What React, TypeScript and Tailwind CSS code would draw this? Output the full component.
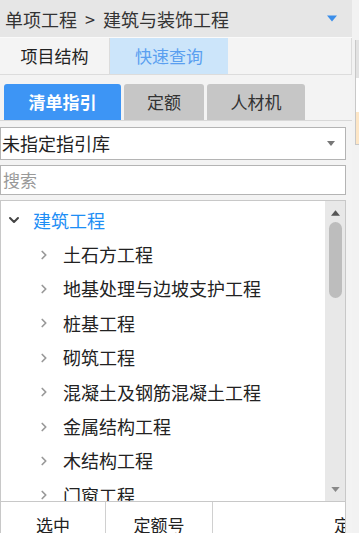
import { ChevronDown, ChevronRight } from "lucide-react";

const font = { fontFamily: '"Noto Sans CJK SC", "Noto Sans", sans-serif' };

const items = [
  "土石方工程",
  "地基处理与边坡支护工程",
  "桩基工程",
  "砌筑工程",
  "混凝土及钢筋混凝土工程",
  "金属结构工程",
  "木结构工程",
  "门窗工程",
];

const Triangle = ({ up, className }: { up?: boolean; className: string }) => (
  <svg width="10" height="6" viewBox="0 0 10 6" className={className}>
    <path d={up ? "M0 6 L5 0 L10 6 Z" : "M0 0 L10 0 L5 6 Z"} fill="currentColor" />
  </svg>
);

export default function App() {
  return (
    <div className="flex w-[359px] h-[533px] overflow-hidden bg-[#f3f3f3] text-[#222]" style={font}>
      {/* main panel */}
      <div className="flex flex-col w-[352px] shrink-0">
        <div className="flex items-center h-[39px] bg-[#e6e6e6] pl-[5px] pr-[15px] text-[18px] text-[#333]">
          <span className="flex-1 leading-none whitespace-pre">单项工程  &gt;  建筑与装饰工程</span>
          <Triangle className="text-[#3b8eea] w-[10px] h-[7px]" />
        </div>
        <div className="h-px bg-[#fafafa]" />
        <div className="flex h-[39px] border-b border-r border-[#dcdcdc] text-[17px]">
          <div className="flex items-center justify-center w-[110px] bg-[#f4f4f4] border-r border-[#dcdcdc]">项目结构</div>
          <div className="flex items-center justify-center w-[118px] bg-[#cce5fa] text-[#5a9ff0]">快速查询</div>
          <div className="flex-1 bg-[#f4f4f4]" />
        </div>
        <div className="flex gap-[3px] pl-[4px] pt-[9px] border-b border-[#d8d8d8] text-[17px]">
          <div className="flex items-center justify-center w-[117px] h-[36px] rounded-t-[3px] bg-[#3d95f5] text-white font-bold">清单指引</div>
          <div className="flex items-center justify-center w-[80px] h-[36px] rounded-t-[3px] bg-[#c6c6c6] text-[#333]">定额</div>
          <div className="flex items-center justify-center w-[98px] h-[36px] rounded-t-[3px] bg-[#c6c6c6] text-[#333]">人材机</div>
        </div>
        <div className="flex flex-col w-[346px] flex-1 bg-[#f3f3f3]">
          <div className="flex items-center mt-[6px] h-[33px] bg-white border border-[#b4b4b4] pl-[1px] pr-[10px] text-[18px]">
            <span className="flex-1">未指定指引库</span>
            <Triangle className="text-[#777] w-[8px] h-[5px]" />
          </div>
          <div className="flex items-center mt-[5px] h-[30px] bg-white border border-[#b4b4b4] pl-[2px] text-[17px] text-[#999]">
            搜索
          </div>
          <div className="flex mt-[5px] h-[302px] bg-white border border-[#c8c8c8]">
            <div className="flex-1 overflow-hidden pt-[2px]">
              <div className="flex items-center h-[34.4px]">
                <ChevronDown className="ml-[5px] w-[16px] h-[16px] text-[#444]" strokeWidth={3} />
                <span className="ml-[11px] text-[18px] text-[#1e8ef5]">建筑工程</span>
              </div>
              {items.map((t) => (
                <div key={t} className="flex items-center h-[34.4px]">
                  <ChevronRight className="ml-[36px] w-[14px] h-[14px] text-[#999]" strokeWidth={3} />
                  <span className="ml-[12px] text-[18px] text-[#222] whitespace-nowrap">{t}</span>
                </div>
              ))}
            </div>
            <div className="flex flex-col items-center w-[20px] bg-[#e8e8e8]">
              <Triangle up className="mt-[9px] text-[#555] w-[9px] h-[6px]" />
              <div className="mt-[6px] w-[13px] h-[76px] rounded-full bg-[#bdbdbd]" />
              <div className="flex-1" />
              <Triangle className="mb-[9px] text-[#888] w-[9px] h-[5px]" />
            </div>
          </div>
          <div className="flex flex-1 bg-white border-l border-r border-[#c8c8c8] text-[17px] leading-none overflow-hidden">
            <div className="flex justify-center pt-[14px] w-[105px] border-r border-[#d0d0d0]">选中</div>
            <div className="flex justify-center pt-[14px] w-[107px] border-r border-[#d0d0d0]">定额号</div>
            <div className="flex-1 flex justify-end pt-[14px] overflow-hidden">
              <span className="mr-[-6px]">定</span>
            </div>
          </div>
        </div>
      </div>
      {/* right strip */}
      <div className="flex-1 bg-[#f2f2f2] pt-[40px] pl-[3px]">
        <div className="flex flex-col h-[105px] border-l border-b border-[#c8c8c8]">
          <div className="h-[38px] bg-[#e2e2e2]" />
          <div className="h-[34px] bg-white" />
          <div className="flex-1 bg-[#fde6c6]" />
        </div>
      </div>
    </div>
  );
}
